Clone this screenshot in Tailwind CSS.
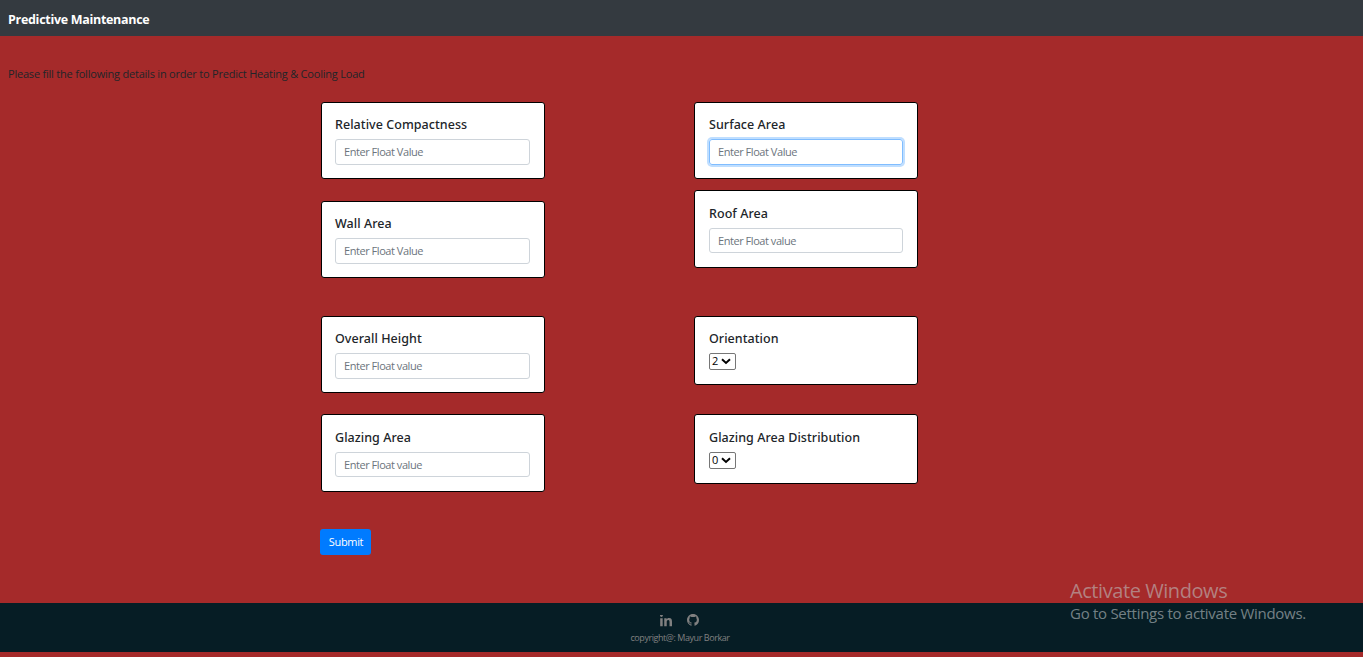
<!DOCTYPE html>
<html lang="en">
<head>
<meta charset="utf-8">
<title>Predictive Maintenance</title>
<script src="https://cdn.jsdelivr.net/npm/@tailwindcss/browser@4"></script>
</head>
<body class="relative flex h-[657px] flex-col overflow-hidden bg-[#a52a2a] font-['Open_Sans','Noto_Sans',sans-serif] text-[#212529]">
<nav class="flex h-9 shrink-0 items-center bg-[#343a40] px-2 pt-1">
  <span class="text-[12.5px] font-bold tracking-[-0.3px] whitespace-nowrap text-white">Predictive Maintenance</span>
</nav>
<main class="h-[567px] shrink-0">
  <p class="h-[66px] px-2 pt-[30px] text-[11px] leading-4 tracking-[-0.21px] whitespace-nowrap">Please fill the following details in order to Predict Heating &amp; Cooling Load</p>
  <form>
    <div class="ml-[321px] flex h-[427px] items-start gap-[149px]">
      <div class="flex w-[224px] flex-col">
        <section class="h-[77px] rounded-[3px] border border-black bg-white px-[13px] pt-[13px]">
          <h2 class="h-[23px] font-['Noto_Sans'] text-[12.5px] leading-[17px] font-medium tracking-[0.05px] whitespace-nowrap">Relative Compactness</h2>
          <input class="block h-[26px] w-[195px] rounded-[3px] border border-[#ced4da] px-2 pb-[2px] text-[11px] tracking-[-0.45px] placeholder:text-[#6c757d]" placeholder="Enter Float Value">
        </section>
        <section class="mt-[22px] h-[77px] rounded-[3px] border border-black bg-white px-[13px] pt-[13px]">
          <h2 class="h-[23px] font-['Noto_Sans'] text-[12.5px] leading-[17px] font-medium tracking-[0.05px] whitespace-nowrap">Wall Area</h2>
          <input class="block h-[26px] w-[195px] rounded-[3px] border border-[#ced4da] px-2 pb-[2px] text-[11px] tracking-[-0.45px] placeholder:text-[#6c757d]" placeholder="Enter Float Value">
        </section>
        <section class="mt-[38px] h-[77px] rounded-[3px] border border-black bg-white px-[13px] pt-[13px]">
          <h2 class="h-[23px] font-['Noto_Sans'] text-[12.5px] leading-[17px] font-medium tracking-[0.05px] whitespace-nowrap">Overall Height</h2>
          <input class="block h-[26px] w-[195px] rounded-[3px] border border-[#ced4da] px-2 pb-[2px] text-[11px] tracking-[-0.45px] placeholder:text-[#6c757d]" placeholder="Enter Float value">
        </section>
        <section class="mt-[21px] h-[78px] rounded-[3px] border border-black bg-white px-[13px] pt-[14px]">
          <h2 class="h-[23px] font-['Noto_Sans'] text-[12.5px] leading-[17px] font-medium tracking-[0.05px] whitespace-nowrap">Glazing Area</h2>
          <input class="block h-[25px] w-[195px] rounded-[3px] border border-[#ced4da] px-2 text-[11px] tracking-[-0.45px] placeholder:text-[#6c757d]" placeholder="Enter Float value">
        </section>
      </div>
      <div class="flex w-[224px] flex-col">
        <section class="h-[77px] rounded-[3px] border border-black bg-white px-[14px] pt-[13px]">
          <h2 class="h-[23px] font-['Noto_Sans'] text-[12.5px] leading-[17px] font-medium tracking-[0.05px] whitespace-nowrap">Surface Area</h2>
          <input class="block h-[26px] w-[194px] rounded-[3px] border border-[#80bdff] px-2 pb-[2px] text-[11px] tracking-[-0.45px] ring-2 ring-[#bfdeff] placeholder:text-[#6c757d]" placeholder="Enter Float Value">
        </section>
        <section class="mt-[11px] h-[78px] rounded-[3px] border border-black bg-white px-[14px] pt-[14px]">
          <h2 class="h-[23px] font-['Noto_Sans'] text-[12.5px] leading-[17px] font-medium tracking-[0.05px] whitespace-nowrap">Roof Area</h2>
          <input class="block h-[25px] w-[194px] rounded-[3px] border border-[#ced4da] px-2 text-[11px] tracking-[-0.45px] placeholder:text-[#6c757d]" placeholder="Enter Float value">
        </section>
        <section class="mt-[48px] h-[69px] rounded-[3px] border border-black bg-white px-[14px] pt-[13px]">
          <h2 class="h-[23px] font-['Noto_Sans'] text-[12.5px] leading-[17px] font-medium tracking-[0.05px] whitespace-nowrap">Orientation</h2>
          <div class="flex h-[17px] w-[27px] items-center rounded-[2px] border border-[#767676] pl-[2px] text-[11px] text-black">2<svg class="mb-px ml-[3px] h-[7px] w-[10px]" viewBox="0 0 10 7" fill="none" stroke="#000" stroke-width="2"><path d="M1 1.2 5 4.9 9 1.2"/></svg></div>
        </section>
        <section class="mt-[29px] h-[70px] rounded-[3px] border border-black bg-white px-[14px] pt-[14px]">
          <h2 class="h-[23px] font-['Noto_Sans'] text-[12.5px] leading-[17px] font-medium tracking-[0.05px] whitespace-nowrap">Glazing Area Distribution</h2>
          <div class="flex h-[17px] w-[27px] items-center rounded-[2px] border border-[#767676] pl-[2px] text-[11px] text-black">0<svg class="mb-px ml-[3px] h-[7px] w-[10px]" viewBox="0 0 10 7" fill="none" stroke="#000" stroke-width="2"><path d="M1 1.2 5 4.9 9 1.2"/></svg></div>
        </section>
      </div>
    </div>
    <button type="button" class="ml-80 flex h-[26px] w-[51px] items-center justify-center rounded-[3px] bg-[#007bff] pl-px text-[11px] tracking-[-0.35px] text-white">Submit</button>
  </form>
</main>
<footer class="flex h-[49px] shrink-0 flex-col items-center bg-[#061d25] pt-[11px] text-[#808080]">
  <div class="flex h-[15px] items-start gap-[15px] pr-[5px]">
    <svg class="mt-px h-3 w-3" viewBox="0 0 448 448" fill="currentColor"><path d="M100.28 416H7.4V116.9h92.88zM53.79 76.1C24.09 76.1 0 51.5 0 21.8a53.79 53.79 0 0 1 107.58 0c0 29.7-24.1 54.3-53.79 54.3zM447.9 416h-92.68V270.4c0-34.7-.7-79.2-48.29-79.2-48.29 0-55.69 37.7-55.69 76.7V416h-92.78V116.9h89.08v40.8h1.3c12.4-23.5 42.69-48.3 87.88-48.3 94 0 111.28 61.9 111.28 142.3V416z"/></svg>
    <svg class="h-3 w-3" viewBox="0 0 16 16" fill="currentColor"><path d="M8 0C3.58 0 0 3.58 0 8c0 3.54 2.29 6.53 5.47 7.59.4.07.55-.17.55-.38v-1.49c-2.01.37-2.53-.49-2.69-.94-.09-.23-.48-.94-.82-1.13-.28-.15-.68-.52-.01-.53.63-.01 1.08.58 1.23.82.72 1.21 1.87.87 2.33.66.07-.52.28-.87.51-1.07-1.78-.2-3.64-.89-3.64-3.95 0-.87.31-1.59.82-2.15-.08-.2-.36-1.02.08-2.12 0 0 .67-.21 2.2.82a7.65 7.65 0 0 1 4 0c1.53-1.04 2.2-.82 2.2-.82.44 1.1.16 1.92.08 2.12.51.56.82 1.27.82 2.15 0 3.07-1.87 3.75-3.65 3.95.29.25.54.73.54 1.48v2.2c0 .21.15.46.55.38A8.01 8.01 0 0 0 16 8c0-4.42-3.58-8-8-8z"/></svg>
  </div>
  <p class="pr-[3px] text-[9px] leading-[18px] tracking-[-0.44px] whitespace-nowrap">copyright@: Mayur Borkar</p>
</footer>
<aside class="absolute top-[578px] left-[1070px] whitespace-nowrap">
  <p class="text-[20px] leading-[26px] tracking-[-0.43px] text-[#bdbdbd]/60">Activate Windows</p>
  <p class="-mt-px text-[15px] leading-5 tracking-[-0.28px] text-white/45">Go to Settings to activate Windows.</p>
</aside>
</body>
</html>
